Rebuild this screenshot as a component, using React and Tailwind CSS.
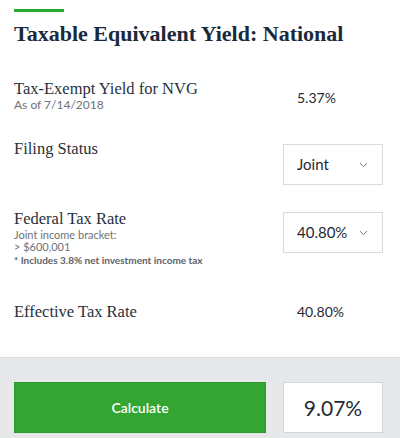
import React from 'react';

const serif = { fontFamily: '"Liberation Serif", "DejaVu Serif", serif' };

const Chevron = () => (
  <svg width="9" height="6" viewBox="0 0 9 6" fill="none">
    <path d="M1 1.2 L4.5 4.6 L8 1.2" stroke="#6b7178" strokeWidth="1" />
  </svg>
);

const Select = ({ value }) => (
  <div className="w-[100px] h-[41px] border border-[#d8dcdf] bg-white flex items-center justify-between pl-[13px] pr-[14px] text-[15px] text-[#1f2a36]">
    <span>{value}</span>
    <Chevron />
  </div>
);

export default function App() {
  return (
    <div
      className="w-[400px] h-[438px] bg-white overflow-hidden flex flex-col"
      style={{ fontFamily: 'Lato, "Open Sans", sans-serif' }}
    >
      <div className="pl-[14px] pr-[17px] flex-1">
        <div className="mt-[9px] h-[3px] w-[50px] bg-[#2ea82e]" />
        <h1
          className="mt-[10px] text-[22px] leading-[24px] font-bold text-[#1b2a3a]"
          style={serif}
        >
          Taxable Equivalent Yield: National
        </h1>

        {/* tax-exempt yield */}
        <div className="mt-[33px] flex items-start">
          <div className="flex-1">
            <div className="text-[16.5px] leading-[20px] text-[#27313c]" style={serif}>
              Tax-Exempt Yield for NVG
            </div>
            <div className="text-[12px] leading-[12px] text-[#6d7379]">As of 7/14/2018</div>
          </div>
          <div className="w-[100px] pl-[14px] pt-[8px] text-[14px] text-[#1f2a36]">5.37%</div>
        </div>

        {/* filing status */}
        <div className="mt-[28px] flex items-start">
          <div className="flex-1 text-[16.5px] leading-[20px] text-[#27313c]" style={serif}>
            Filing Status
          </div>
          <div className="mt-[5px]">
            <Select value="Joint" />
          </div>
        </div>

        {/* federal rate */}
        <div className="mt-[24px] flex items-start">
          <div className="flex-1">
            <div className="text-[16.5px] leading-[20px] text-[#27313c]" style={serif}>
              Federal Tax Rate
            </div>
            <div className="text-[11px] leading-[12px] text-[#6d7379]">Joint income bracket:</div>
            <div className="text-[11px] leading-[12px] text-[#6d7379]">&gt; $600,001</div>
            <div className="mt-[2px] text-[10px] leading-[11px] font-bold text-[#5d636a]">
              * Includes 3.8% net investment income tax
            </div>
          </div>
          <div className="mt-[3px]">
            <Select value="40.80%" />
          </div>
        </div>

        {/* effective rate */}
        <div className="mt-[35px] flex items-center">
          <div className="flex-1 text-[16.5px] leading-[20px] text-[#27313c]" style={serif}>
            Effective Tax Rate
          </div>
          <div className="w-[100px] pl-[14px] text-[14px] text-[#1f2a36]">40.80%</div>
        </div>
      </div>

      <div className="h-[81px] bg-[#e7e8ea] border-t border-[#dcdee0] pl-[14px] pr-[17px] pt-[24px] flex gap-[17px]">
        <button className="w-[252px] h-[51px] bg-[#33a532] border border-[#2e9a2d] text-white text-[14px] font-semibold">
          Calculate
        </button>
        <div className="w-[100px] h-[51px] bg-white border border-[#d3d6d9] flex items-center justify-center text-[21px] text-[#1f2a36]">
          9.07%
        </div>
      </div>
    </div>
  );
}
